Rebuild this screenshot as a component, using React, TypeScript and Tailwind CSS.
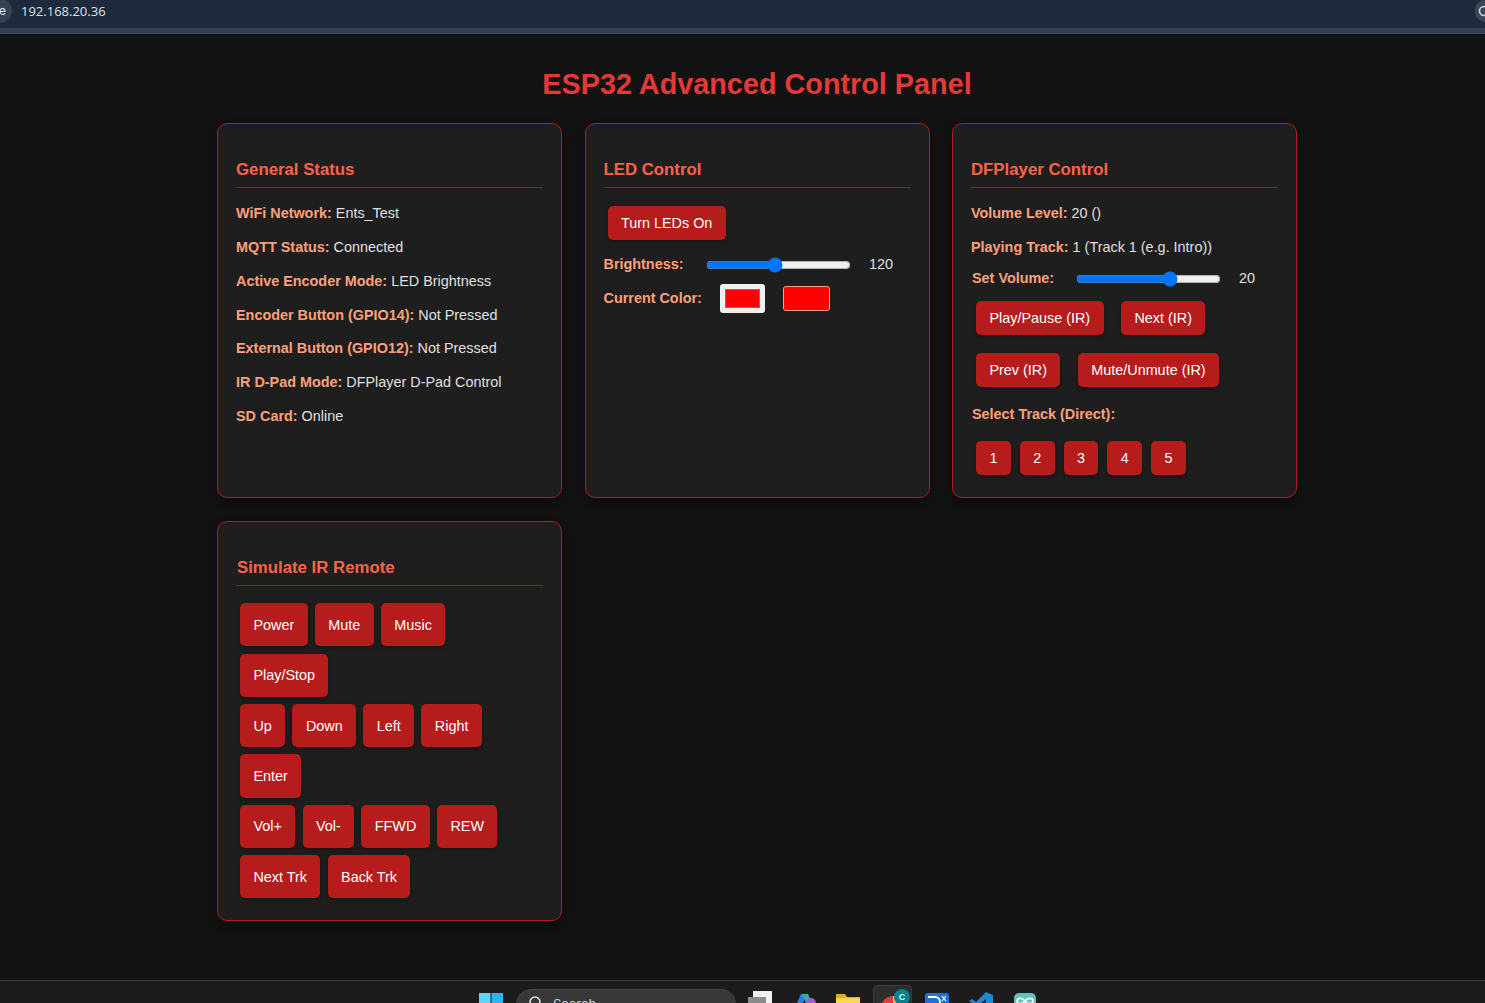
import React from "react";

const F = "[font-family:'Liberation_Sans',Arial,sans-serif]";

function Card({ title, className = "", children, inset = false }: { title: string; className?: string; children: React.ReactNode; inset?: boolean }) {
  return (
    <section className={`bg-[#1e1e1e] border border-[#b71c1c] rounded-[10px] px-[18px] pt-[36px] shadow-[0_4px_8px_rgba(0,0,0,0.4)] ${className}`}>
      <h2 className={`text-[16.8px] leading-[20px] font-bold text-[#ff6347] pb-[7px] border-b border-[#7f2323] mb-[17.2px] ${inset ? "pl-px" : ""}`}>{title}</h2>
      {children}
    </section>
  );
}

function Row({ label, value }: { label: string; value: string }) {
  return (
    <p className="text-[14.4px] leading-[16.8px] h-[16.8px] mb-[17px] text-[#e0e0e0] whitespace-nowrap">
      <strong className="font-bold text-[#ffa07a]">{label}</strong> {value}
    </p>
  );
}

function Btn({ children, tall = false }: { children: React.ReactNode; tall?: boolean }) {
  return (
    <button className={`bg-[#b71c1c] text-white text-[14.4px] leading-[17px] rounded-[5px] px-[13.4px] pt-[1px] shadow-[0_2px_4px_rgba(0,0,0,0.3)] whitespace-nowrap ${tall ? "h-[43.2px]" : "h-[34px]"}`}>
      {children}
    </button>
  );
}

function Slider({ label, max, value, shown, labelW, gap }: { label: string; max: number; value: number; shown: string; labelW: string; gap: string }) {
  return (
    <div className="flex items-center h-[20px] text-[14.4px]">
      <strong className={`font-bold text-[#ffa07a] ${labelW}`}>{label}</strong>
      <input type="range" min={0} max={max} defaultValue={value} className="w-[145px] m-0" />
      <span className={`text-[#e0e0e0] ${gap}`}>{shown}</span>
    </div>
  );
}

function TaskIcons() {
  return (
    <div className="flex items-start h-[23px] overflow-hidden bg-[#1c1c1c] border-t border-[#3a3a3a] shrink-0">
      <div className="flex items-start ml-[479px] pt-[12px]">
        <svg width="24" height="24" viewBox="0 0 24 24"><rect width="11.5" height="11.5" fill="#5fd4fb" /><rect x="12.5" width="11.5" height="11.5" fill="#2fb4f0" /></svg>
      </div>
      <div className="ml-[13px] mt-[8px] w-[220px] h-[30px] bg-[#383838] rounded-[15px] border border-[#444] flex items-start pl-[11px] pt-[5px] gap-[9px] text-[13px] text-[#cfcfcf] font-['Inter',sans-serif]">
        <svg width="16" height="16" viewBox="0 0 16 16" fill="none" stroke="#e8e8e8" strokeWidth="1.5"><circle cx="7" cy="7" r="5" /></svg>
        <span>Search</span>
      </div>
      <svg className="ml-[12px] mt-[10px]" width="24" height="24" viewBox="0 0 24 24"><rect x="5" width="19" height="20" fill="#f2f2f2" /><rect y="6" width="18" height="10" fill="#8a8a8a" /></svg>
      <svg className="ml-[20px] mt-[12px]" width="24" height="24" viewBox="0 0 24 24"><path d="M4 12 L9 1 H15 L10 12Z" fill="#2f7fe0" /><path d="M10 1 H16 L20 10 H14Z" fill="#26b6a8" /><circle cx="19" cy="10" r="5" fill="#a45bd6" /></svg>
      <svg className="ml-[20px] mt-[13px]" width="24" height="24" viewBox="0 0 24 24"><path d="M0 0 H9 L11 3 H24 V20 H0Z" fill="#e8a917" /><rect y="4" width="24" height="16" fill="#ffd44e" /></svg>
      <div className="ml-[13px] mt-[4px] w-[39px] h-[24px] bg-[#2d2d2d] rounded-t-[4px] border border-[#3c3c3c] flex items-start relative">
        <svg className="ml-[7px] mt-[10px]" width="24" height="24" viewBox="0 0 24 24"><circle cx="12" cy="12" r="12" fill="#e33b2e" /><path d="M12 12 L2 18 A12 12 0 0 1 2 6Z" fill="#2fa84f" /><path d="M12 0 A12 12 0 0 1 24 12 H12Z" fill="#fbc02d" /><circle cx="12" cy="12" r="5" fill="#fff" /><circle cx="12" cy="12" r="3.8" fill="#2b7de9" /></svg>
        <span className="absolute left-[20px] top-[3px] w-[16px] h-[16px] rounded-full bg-[#00838f] text-[#e0f7fa] text-[9px] leading-[16px] text-center font-bold">C</span>
      </div>
      <svg className="ml-[13px] mt-[12px]" width="24" height="24" viewBox="0 0 24 24"><rect width="24" height="24" rx="3" fill="#1e73d8" /><path d="M3 4 H10 A4 4 0 0 1 10 14 H7" fill="none" stroke="#fff" strokeWidth="2" /><path d="M17 3 L21 8 M21 3 L17 8" stroke="#fff" strokeWidth="1.2" /></svg>
      <svg className="ml-[20px] mt-[11px]" width="24" height="24" viewBox="0 0 24 24"><path d="M17 0 L24 3 V21 L17 24 L7 14 L3 17 L0 15 L5 12 L0 9 L3 7 L7 10Z M17 7 L11 12 L17 17Z" fill="#1f8ad2" fillRule="evenodd" /></svg>
      <svg className="ml-[21px] mt-[12px]" width="22" height="24" viewBox="0 0 22 24"><rect width="22" height="24" rx="5" fill="#5ec4bd" /><path d="M11 8 C8 4 3 5 3 8 C3 11 8 12 11 8 C14 4 19 5 19 8 C19 11 14 12 11 8Z" fill="none" stroke="#fff" strokeWidth="1.6" /></svg>
    </div>
  );
}

const irRows = [
  ["Power", "Mute", "Music"],
  ["Play/Stop"],
  ["Up", "Down", "Left", "Right"],
  ["Enter"],
  ["Vol+", "Vol-", "FFWD", "REW"],
  ["Next Trk", "Back Trk"],
];

export default function App() {
  return (
    <div className={`h-[1003px] overflow-hidden flex flex-col bg-[#121212] ${F}`}>
      <div className="h-[28px] bg-[#1e293b] flex items-center shrink-0">
        <div className="w-[24px] h-[24px] -ml-[12px] -mt-[6px] rounded-full bg-[#334155] text-[#e2e8f0] text-[12px] font-['Inter',sans-serif] leading-[24px] text-right pr-[6px]">e</div>
        <span className="ml-[9px] -mt-[5px] text-[13px] text-[#dbe4ee] font-['Open_Sans',sans-serif]">192.168.20.36</span>
        <div className="ml-auto -mt-[6px] w-[10px] h-[22px] rounded-l-full bg-[#3b4658] overflow-hidden flex items-center pl-[3px]">
          <svg className="shrink-0" width="12" height="12" viewBox="0 0 12 12" fill="none" stroke="#cfd6df" strokeWidth="1.6"><circle cx="6" cy="6" r="4.5" /></svg>
        </div>
      </div>
      <div className="h-[6px] bg-[#334155] border-b border-[#3f4652] shrink-0" />
      <main className="flex-1 min-h-0 pl-[217px]">
        <h1 className="w-[1080px] text-center text-[#e53935] text-[28.8px] leading-[33px] font-bold mt-[34px] mb-[22px]">ESP32 Advanced Control Panel</h1>
        <div className="w-[1080px] grid grid-cols-3 gap-x-[22.5px] gap-y-[23px] items-start">
          <Card title="General Status" className="h-[375px]">
            <Row label="WiFi Network:" value="Ents_Test" />
            <Row label="MQTT Status:" value="Connected" />
            <Row label="Active Encoder Mode:" value="LED Brightness" />
            <Row label="Encoder Button (GPIO14):" value="Not Pressed" />
            <Row label="External Button (GPIO12):" value="Not Pressed" />
            <Row label="IR D-Pad Mode:" value="DFPlayer D-Pad Control" />
            <Row label="SD Card:" value="Online" />
          </Card>
          <Card title="LED Control" className="h-[375px]">
            <div className="pl-[4px] pt-[1px]"><Btn>Turn LEDs On</Btn></div>
            <div className="mt-[15px]"><Slider label="Brightness:" max={255} value={120} shown="120" labelW="w-[102.5px]" gap="ml-[18px]" /></div>
            <div className="flex items-center mt-[9px] text-[14.4px]">
              <strong className="font-bold text-[#ffa07a] w-[116.5px]">Current Color:</strong>
              <input type="color" defaultValue="#ff0000" className="w-[45px] h-[29px] bg-[#f0f0f0] rounded-[3px] px-[3px] py-[1px] shrink-0" />
              <div className="ml-[18px] w-[47px] h-[25px] bg-[#ff0000] border border-[#ffa07a] rounded-[3px]" />
            </div>
          </Card>
          <Card title="DFPlayer Control" className="h-[375px]">
            <Row label="Volume Level:" value="20 ()" />
            <Row label="Playing Track:" value="1 (Track 1 (e.g. Intro))" />
            <div className="-mt-[4px] pl-px"><Slider label="Set Volume:" max={30} value={20} shown="20" labelW="w-[104px]" gap="ml-[18px]" /></div>
            <div className="flex flex-col gap-[18px] mt-[12px] pl-[5px]">
              <div className="flex gap-[17.5px]"><Btn>Play/Pause (IR)</Btn><Btn>Next (IR)</Btn></div>
              <div className="flex gap-[17.5px]"><Btn>Prev (IR)</Btn><Btn>Mute/Unmute (IR)</Btn></div>
            </div>
            <p className="mt-[19px] pl-px text-[14.4px] leading-[17px] font-bold text-[#ffa07a]">Select Track (Direct):</p>
            <div className="flex gap-[9px] mt-[18px] pl-[5px]">
              {["1", "2", "3", "4", "5"].map((n) => <Btn key={n}>{n}</Btn>)}
            </div>
          </Card>
          <Card title="Simulate IR Remote" className="h-[400px]" inset>
            <div className="flex flex-col gap-[7.2px] pl-[4px]">
              {irRows.map((row) => (
                <div key={row[0]} className="flex gap-[7.3px]">
                  {row.map((b) => <Btn key={b} tall>{b}</Btn>)}
                </div>
              ))}
            </div>
          </Card>
        </div>
      </main>
      <TaskIcons />
    </div>
  );
}
